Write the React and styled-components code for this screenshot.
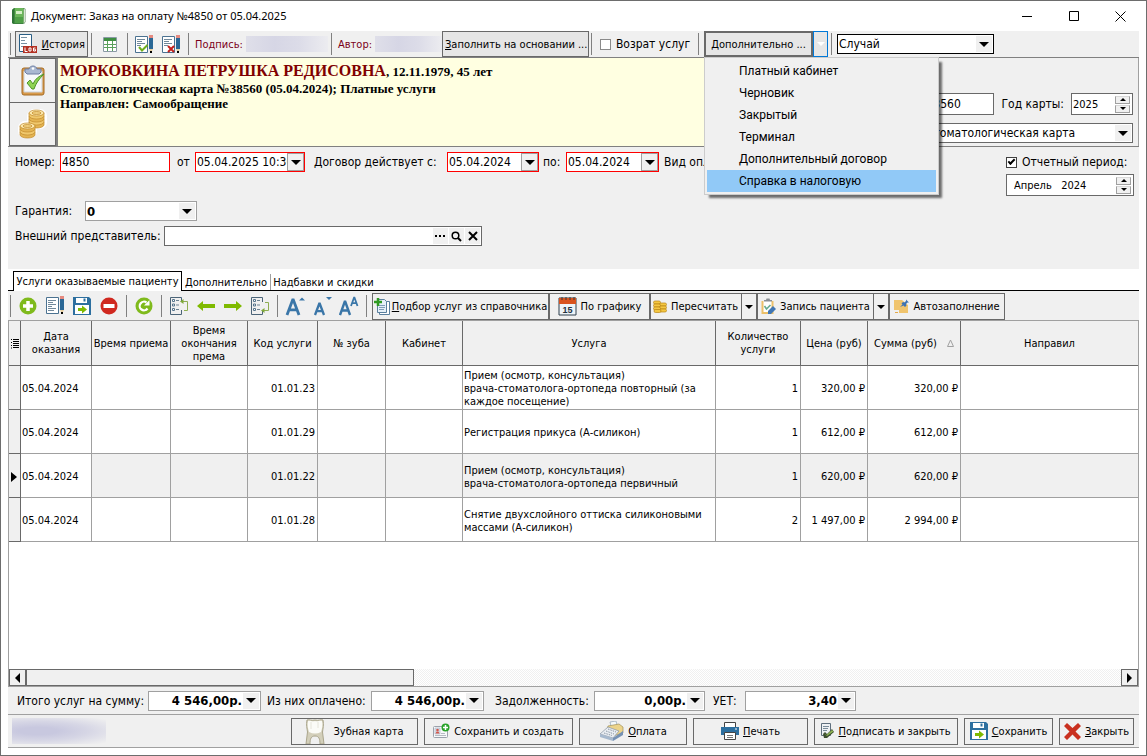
import React from "react";
import styled, { createGlobalStyle, css } from "styled-components";

const UI = '"DejaVu Sans Condensed", "Noto Sans", sans-serif';
const SYS = 'Roboto, "Noto Sans", sans-serif';
const SERIF = '"Liberation Serif", "Times New Roman", serif';
const FACE = "#f0f0f0";
const DARK = "#696969";
const MID = "#a0a0a0";

const Global = createGlobalStyle`
  *, *::before, *::after { box-sizing: border-box; }
  body { margin: 0; background: #fff; }
  button, input, select { font: inherit; color: inherit; margin: 0; border-radius: 0; }
  button { padding: 0; cursor: default; }
  svg { display: block; flex: none; }
`;

const Window = styled.div`
  display: flex;
  flex-direction: column;
  min-height: 100vh;
  padding: 0 7px 7px;
  border: 1px solid #6d6d6d;
  background: #fff;
  color: #000;
  font: 11px/13px ${UI};
  white-space: nowrap;
`;

const TitleBar = styled.header`
  display: flex;
  align-items: center;
  height: 30px;
  gap: 4px;
  padding-left: 2px;
`;
const Title = styled.h1`
  flex: 1;
  margin: 0;
  font: 400 11px/16px "Noto Sans", "Open Sans", sans-serif;
`;
const WindowButtons = styled.div`
  display: flex;
  margin-right: -5px;
`;
const WindowButton = styled.button`
  display: grid;
  place-items: center;
  width: 47px;
  height: 30px;
  border: 0;
  background: none;
`;

const Toolbar = styled.div`
  display: flex;
  align-items: center;
  height: ${(p) => p.$height}px;
  padding-left: 2px;
  background: ${FACE};
`;
const Sep = styled.span`
  flex: 0 0 1px;
  height: 22px;
  background: #808080;
`;
const Group = styled.div`
  display: flex;
  align-items: center;
  justify-content: ${(p) => (p.$start ? "flex-start" : "center")};
  flex: 0 0 ${(p) => p.$width}px;
  padding: ${(p) => (p.$start ? "0 0 0 6px" : "0")};
`;
const IconButton = styled.button`
  display: grid;
  place-items: center;
  width: 27px;
  height: 26px;
  border: 0;
  background: none;
`;
const PushButton = styled.button`
  display: flex;
  align-items: center;
  align-self: flex-end;
  justify-content: ${(p) => (p.$center ? "center" : "flex-start")};
  gap: ${(p) => p.$gap || 4}px;
  flex: none;
  width: ${(p) => p.$width}px;
  height: ${(p) => p.$height || 27}px;
  padding: 0 2px;
  border: ${(p) => (p.$heavy ? 2 : 1)}px solid ${DARK};
  background: ${(p) => (p.$raised ? "#e6e6e6" : FACE)};
`;
const SplitArrow = styled.button`
  display: grid;
  place-items: center;
  align-self: flex-end;
  flex: 0 0 15px;
  height: ${(p) => p.$height || 27}px;
  border: 1px solid ${(p) => (p.$active ? "#0078d7" : DARK)};
  border-left-width: ${(p) => (p.$active ? 1 : 0)}px;
  background: ${(p) => (p.$active ? "#e6e6e6" : FACE)};
  color: ${(p) => (p.$active ? "#fff" : "#000")};
`;
const Maroon = styled.span`
  flex: 0 0 ${(p) => p.$width}px;
  color: #7b0018;
`;
const Redacted = styled.span`
  flex: 0 0 ${(p) => p.$width}px;
  height: ${(p) => p.$height || 16}px;
  background: linear-gradient(90deg, #dfdfe9, #d6d6e5 35%, #dcdce8 65%, #ececf0);
`;
const RedactedSoft = styled.span`
  width: 94px;
  height: 26px;
  background: radial-gradient(ellipse at 28% 50%, #c8c8df 20%, #d6d6e5 52%, ${FACE} 96%);
`;

const MenuAnchor = styled.div`
  position: relative;
  display: flex;
`;
const Menu = styled.ul`
  position: absolute;
  z-index: 5;
  top: 26px;
  left: 0;
  width: 235px;
  margin: 0;
  padding: 2px;
  list-style: none;
  border: 1px solid #ccc;
  background: ${FACE};
  box-shadow: 4px 4px 2px -1px rgba(0, 0, 0, 0.55);
`;
const MenuItem = styled.button`
  display: block;
  width: 100%;
  height: 22px;
  padding: 0 0 0 32px;
  border: 0;
  text-align: left;
  font: 12px/22px ${SYS};
  background: ${(p) => (p.$active ? "#91c9f7" : "transparent")};
`;

const CheckLabel = styled.label`
  display: flex;
  align-items: center;
  gap: 5px;
  font-size: 12px;
`;
const CheckBox = styled.input`
  appearance: none;
  display: grid;
  place-items: center;
  flex: none;
  width: 11px;
  height: 11px;
  border: 1px solid #8a8a8a;
  background: #fff;
  &:checked { border-color: #404040; }
  &:checked::before {
    content: "";
    width: 7px;
    height: 4px;
    margin-bottom: 2px;
    border: solid #000;
    border-width: 0 0 2px 2px;
    transform: rotate(-45deg);
  }
`;

const Combo = styled.div`
  display: grid;
  align-items: center;
  flex: none;
  width: ${(p) => p.$width}px;
  height: 20px;
  border: 1px solid ${(p) => p.$tone || DARK};
  background: #fff;
  font-size: 12px;
  & > * { grid-area: 1 / 1; }
`;
const Select = styled.select`
  appearance: none;
  width: 100%;
  height: 18px;
  padding: 0 18px 0 1px;
  border: 0;
  outline: 0;
  background: none;
  text-align: ${(p) => (p.$right ? "right" : "left")};
  text-align-last: ${(p) => (p.$right ? "right" : "left")};
  font-weight: ${(p) => (p.$bold ? 700 : 400)};
  font-size: ${(p) => (p.$bold ? 13 : 12)}px;
`;
const ComboArrow = styled.span`
  display: grid;
  place-items: center;
  justify-self: end;
  width: 16px;
  height: 16px;
  margin-right: 1px;
  background: ${FACE};
  pointer-events: none;
`;

const Field = styled.div`
  display: flex;
  align-items: center;
  flex: none;
  width: ${(p) => p.$width}px;
  height: ${(p) => p.$height || 20}px;
  border: 1px solid ${(p) => (p.$required ? "#f00" : DARK)};
  background: #fff;
`;
const TextInput = styled.input`
  flex: 1;
  min-width: 0;
  height: 100%;
  padding: 0 0 0 ${(p) => p.$inset || 1}px;
  border: 0;
  outline: 0;
  background: none;
  font-size: ${(p) => (p.$small ? 11 : 12)}px;
`;
const DropButton = styled.button`
  display: grid;
  place-items: center;
  flex: 0 0 17px;
  height: 18px;
  border: 1px solid ${MID};
  background: ${FACE};
`;
const FlatButton = styled.button`
  display: grid;
  place-items: center;
  width: 15px;
  height: 16px;
  margin-right: 1px;
  border: 0;
  background: ${FACE};
`;
const Spinner = styled.div`
  display: flex;
  flex-direction: column;
  gap: 1px;
  margin-right: 2px;
`;
const SpinButton = styled.button`
  display: grid;
  place-items: center;
  width: 15px;
  height: 8px;
  border: 1px solid ${MID};
  border-top-color: #d8d8d8;
  background: ${FACE};
`;

const Patient = styled.section`
  display: flex;
  height: 90px;
  border: solid #808080;
  border-width: 1px 0;
  background: ${FACE};
`;
const SideButtons = styled.div`
  display: flex;
  flex-direction: column;
  flex: 0 0 50px;
  padding-left: 1px;
  border-right: 2px solid #808080;
`;
const SideButton = styled.button`
  display: grid;
  place-items: center;
  flex: 1;
  border: 1px solid ${DARK};
  background: ${FACE};
  & + & { border-top: 0; }
`;
const PatientText = styled.div`
  flex: 1;
  min-width: 0;
  padding: 3px 2px;
  background: #ffffe1;
  font: 700 13px/15px ${SERIF};
`;
const Line = styled.p`
  margin: 0;
  line-height: ${(p) => p.$lh || 15}px;
`;
const PatientName = styled.span`
  color: #800000;
  font-size: 16px;
`;
const CardPanel = styled.div`
  display: flex;
  flex-direction: column;
  align-items: flex-end;
  justify-content: flex-end;
  gap: 8px;
  flex: 0 0 435px;
  padding: 0 5px 3px 0;
  border-right: 1px solid ${MID};
`;
const CardRow = styled.div`
  display: flex;
  align-items: center;
  gap: 7px;
`;

const Form = styled.section`
  display: flex;
  justify-content: space-between;
  height: 122px;
  padding: 5px 5px 0 7px;
  background: ${FACE};
`;
const FormColumn = styled.div`
  display: flex;
  flex-direction: column;
  align-items: flex-start;
  gap: ${(p) => (p.$tight ? 2 : 5)}px;
`;
const FormRow = styled.div`
  display: flex;
  align-items: center;
  height: 20px;
  &:first-child { margin-bottom: ${(p) => (p.$spaced ? 24 : 0)}px; }
`;
const Label = styled.label`
  flex: 0 0 ${(p) => (p.$width ? `${p.$width}px` : "auto")};
  padding-left: ${(p) => p.$inset || 0}px;
  font-size: 12px;
  line-height: 16px;
`;

const TabStrip = styled.nav`
  display: flex;
  align-items: flex-end;
  height: 22px;
  background: linear-gradient(#000, #000) bottom / 100% 1px no-repeat #fff;
`;
const Tab = styled.button`
  height: ${(p) => (p.$active ? 20 : 16)}px;
  width: ${(p) => p.$width}px;
  margin-left: ${(p) => (p.$active ? 5 : 0)}px;
  margin-bottom: ${(p) => (p.$active ? 0 : 1)}px;
  border: 0 solid ${MID};
  background: #fff;
  ${(p) => p.$divided && css`border-left-width: 1px;`}
  ${(p) => p.$active && css`border: solid #000; border-width: 1px 1px 0;`}
`;

const GridArea = styled.section`
  display: flex;
  flex-direction: column;
  flex: 1;
  border: 1px solid ${MID};
  background: #fff;
`;
const Table = styled.table`
  width: 100%;
  table-layout: fixed;
  border-spacing: 0;
`;
const Th = styled.th`
  height: 45px;
  padding: 0;
  border: solid ${DARK};
  border-width: 0 1px 1px 0;
  background: ${FACE};
  font-weight: 400;
  white-space: normal;
  &:last-child { border-right: 0; }
`;
const Td = styled.td`
  height: 44px;
  padding: 2px 2px 0 1px;
  border: solid ${MID};
  border-width: 0 1px 1px 0;
  background: ${(p) => (p.$shade ? FACE : "#fff")};
  text-align: ${(p) => (p.$right ? "right" : "left")};
  white-space: pre-line;
  &:first-child { border-color: ${DARK}; }
  &:last-child { border-right: 0; }
`;
const HeadFlex = styled.span`
  display: flex;
  align-items: center;
  justify-content: space-between;
  padding: 0 6px;
`;
const Marker = styled.span`
  display: grid;
  place-items: center;
`;
const ScrollBar = styled.div`
  display: flex;
  height: 17px;
  margin-top: auto;
  background: repeating-conic-gradient(#fff 0 25%, ${FACE} 0 50%) 0 0 / 2px 2px;
`;
const ScrollButton = styled.button`
  display: grid;
  place-items: center;
  width: 17px;
  border: 1px solid ${DARK};
  background: ${FACE};
  &:last-child { margin-left: auto; }
`;
const Thumb = styled.div`
  width: 388px;
  border: 1px solid ${DARK};
  background: ${FACE};
`;

const Totals = styled.section`
  display: flex;
  align-items: center;
  height: 28px;
  padding-left: 9px;
  border-bottom: 1px solid ${MID};
  background: ${FACE};
`;
const Footer = styled.footer`
  display: flex;
  align-items: center;
  justify-content: space-between;
  height: 33px;
  padding: 0 5px 0 4px;
  border-bottom: 1px solid ${MID};
  background: ${FACE};
`;
const Actions = styled.div`
  display: flex;
  gap: 6px;
`;

/* ---------- icons ---------- */
const Down = ({ size = 10 }) => (
  <svg width={size} height={size / 2} viewBox="0 0 10 5"><path d="M0 0h10L5 5z" fill="currentColor" /></svg>
);
const Up = () => (
  <svg width="6" height="3" viewBox="0 0 6 3"><path d="M0 3h6L3 0z" /></svg>
);
const Book = () => (
  <svg width="17" height="18" viewBox="0 0 17 18">
    <path d="M2 3l2-2h10l1 1v14l-2 1H3l-1-1z" fill="#3d8240" />
    <path d="M13.500 2h2v13l-2 1.500z" fill="#d9e6d4" stroke="#7f9c7c" strokeWidth=".5" />
    <path d="M4.500 1h9v15h-9z" fill="#6cb65b" />
    <path d="M2 3l2.500-2v15H2z" fill="#2f7436" />
    <path d="M6 4h6v3H6z" fill="#d6efc8" />
    <path d="M5 10h8v6H5z" fill="#4f9f47" />
  </svg>
);
const LogIcon = () => (
  <svg width="20" height="20" viewBox="0 0 20 20">
    <path d="M1.500.5h12v17h-12z" fill="#fff" stroke="#2b5f85" />
    <path d="M3 3.500h6M3 6.500h4M3 9.500h6M3 12.500h3" stroke="#7890a2" />
    <path d="M5 12h14v7H5z" fill="#b23022" />
    <path d="M7 13.500v4h2.500M11 14h2v3h-2zM17.500 14h-2v3h2v-1.500h-1" fill="none" stroke="#fff" />
  </svg>
);
const SheetIcon = () => (
  <svg width="14" height="15" viewBox="0 0 14 15">
    <path d="M.5.5h13v14H.5z" fill="#fff" stroke="#8a9aa4" />
    <path d="M1 1h12v3H1z" fill="#3e8e41" />
    <path d="M1 7.500h12M1 10.500h12M4.500 4v10M9.500 4v10" stroke="#5aa05c" />
  </svg>
);
const Pencil = ({ x }) => (
  <g transform={`translate(${x} 0)`}>
    <path d="M0 0h4v3H0z" fill="#e58a80" />
    <path d="M0 3h4v11H0z" fill="#2a6795" />
    <path d="M0 14h4l-2 4z" fill="#e7cfa0" />
    <path d="M1 16h2v2H1z" fill="#000" />
  </g>
);
const DocPencil = ({ mark }) => (
  <svg width="19" height="19" viewBox="0 0 19 19">
    <path d="M.5 1.500h12v16H.5z" fill="#fff" stroke="#4b7291" />
    <path d="M2 4.500h8M2 6.500h5M2 8.500h8M2 10.500h4" stroke="#71889a" />
    {!mark && <path d="M2 12.500h8M2 14.500h6" stroke="#71889a" />}
    {mark === "check" && <path d="M4 12l3 3.500L12.500 10" fill="none" stroke="#6fae1d" strokeWidth="2" />}
    {mark === "cross" && <path d="M6 11l6 6M12 11l-6 6" stroke="#c3201c" strokeWidth="2" />}
    <Pencil x={14} />
  </svg>
);
const Clipboard = () => (
  <svg width="24" height="31" viewBox="0 0 24 31">
    <rect x="1" y="3" width="22" height="27" rx="2" fill="#d99b4c" stroke="#a56a22" />
    <path d="M3 6h18v21H3z" fill="#f6f8fb" stroke="#cdd3da" />
    <path d="M4 4h4c1-4 7-4 8 0h4v3l-2 2H6L4 7z" fill="#a9b8d2" stroke="#6e7fa3" />
    <circle cx="12" cy="3.500" r="1.300" fill="#fff" />
    <path d="M6 18l3-3 3 4c2-5 6-8 11-10-5 5-8 9-10 15h-2z" fill="#8fd455" stroke="#4e9427" />
  </svg>
);
const Stack = ({ x, y, n }) => (
  <g transform={`translate(${x} ${y})`} stroke="#c08a2c" strokeWidth=".7">
    {Array.from({ length: n }, (_, i) => (
      <path key={i} d={`M0 ${(n - i) * 3}v3c1 4 14 4 15 0v-3z`} fill={i % 2 ? "#f0c86c" : "#e4b452"} />
    ))}
    <ellipse cx="7.500" cy="3" rx="7.500" ry="3" fill="#fbe7ac" />
    <ellipse cx="7.500" cy="3" rx="4.500" ry="1.500" fill="#efcd7c" />
  </g>
);
const Coins = () => (
  <svg width="30" height="30" viewBox="0 0 30 30">
    <g fill="#fff"><rect x="9" y="0" width="20" height="20" rx="7" /><rect x="0" y="12" width="19" height="17" rx="7" /></g>
    <g transform="translate(-1 -1)"><Stack x={12} y={2} n={4} /></g>
    <Stack x={2} y={14} n={3} />
  </svg>
);
const SmallCoins = () => (
  <svg width="14" height="13" viewBox="0 0 14 13">
    {[0, 3, 6].map((y) => (
      <g key={y} stroke="#b98413" strokeWidth=".7" fill="#f4c742">
        <rect x=".5" y={y + 1} width="7" height="3" rx="1.500" />
        <rect x="6.500" y={y + 3} width="7" height="3" rx="1.500" />
      </g>
    ))}
    <rect x="1" y="9.500" width="7" height="3" rx="1.500" fill="#f4c742" stroke="#b98413" strokeWidth=".7" />
  </svg>
);
const Disc = ({ kind }) => (
  <svg width="18" height="18" viewBox="0 0 18 18">
    <circle cx="9" cy="9" r="8.500" fill={kind === "minus" ? "#d0281f" : "#7fba1c"} />
    {kind === "plus" && <path d="M9 4v10M4 9h10" stroke="#fff" strokeWidth="3.500" />}
    {kind === "minus" && <path d="M3.500 9h11" stroke="#fff" strokeWidth="4" />}
    {kind === "refresh" && (
      <>
        <path d="M12.500 11.500A4.300 4.300 0 1 1 11.500 5.500" fill="none" stroke="#fff" strokeWidth="2.200" />
        <path d="M9 8.500h5.500V3z" fill="#fff" />
      </>
    )}
  </svg>
);
const Floppy = () => (
  <svg width="18" height="18" viewBox="0 0 18 18">
    <path d="M0 0h16l2 2v16H0z" fill="#2d6f9f" />
    <path d="M3 1h11v5H3z" fill="#fff" /><path d="M10.500 1.500h2v3h-2z" fill="#2d6f9f" />
    <path d="M2 8h14v9H2z" fill="#fff" />
    <path d="M5 11h4V8.500l5 4-5 4V14H5z" fill="#7fba00" />
  </svg>
);
const ListMove = ({ up }) => (
  <svg width="19" height="18" viewBox="0 0 19 18">
    <path d="M11.500 5V.5H.5v17h11V13" fill="none" stroke="#4b6478" />
    <path d="M2.500 2.500h2v2h-2zM2.500 7h2v2h-2zM2.500 11.500h2v2h-2z" fill="#fff" stroke="#56748c" />
    <path d="M6 3.500h3M6 8h3M6 12.500h3" stroke="#6c8393" />
    <path d={up ? "M13 4.500h4.500v9H14" : "M14 5.500h3.500v8H13"} fill="none" stroke="#8fae52" />
    <path d={up ? "M13.500 2v5L10 4.500z" : "M13.500 11v5L10 13.500z"} fill="#7fa83a" />
  </svg>
);
const Arrow = ({ right }) => (
  <svg width="18" height="10" viewBox="0 0 18 10">
    <path d={right ? "M18 5L12 0v3H0v4h12v3z" : "M0 5L6 0v3h12v4H6v3z"} fill="#7fba00" />
  </svg>
);
const A = ({ x, w, y, h, s }) => (
  <path
    d={`M${x} ${y}L${x + w / 2} ${y - h}L${x + w} ${y}M${x + w * 0.2} ${y - h * 0.32}H${x + w * 0.8}`}
    fill="none" stroke="#3a76a8" strokeWidth={s} strokeLinejoin="bevel"
  />
);
const FontIcon = ({ kind }) => (
  <svg width="20" height="20" viewBox="0 0 20 20">
    {kind === "up" && <><A x={2} w={12} y={19} h={16} s={2.8} /><path d="M14 4.500h6l-3-3z" fill="#3a76a8" /></>}
    {kind === "down" && <><A x={3} w={9} y={19} h={12} s={2.3} /><path d="M14 1h6l-3 3z" fill="#3a76a8" /></>}
    {kind === "both" && <><A x={1} w={10} y={19} h={14} s={2.4} /><A x={12} w={6.5} y={10} h={9} s={1.8} /></>}
  </svg>
);
const AddDocs = () => (
  <svg width="16" height="17" viewBox="0 0 16 17">
    <path d="M5.500 3.500h10v13h-10z" fill="#fff" stroke="#5a7f9e" />
    <path d="M3.500 1.500h7l2 2v11h-9z" fill="#e6f0f8" stroke="#5a7f9e" />
    <path d="M5 7.500h6M5 9.500h6M5 11.500h5" stroke="#7f9db8" />
    <path d="M4 0v8M0 4h8" stroke="#2f9a23" strokeWidth="2.500" />
  </svg>
);
const Calendar = () => (
  <svg width="19" height="19" viewBox="0 0 19 19">
    <path d="M1 1h17v17H1z" fill="#eef4f8" stroke="#2e3f4d" />
    <path d="M1 1h17v6H1z" fill="#d9531e" /><path d="M4 0v3M8 0v3M12 0v3M16 0v3" stroke="#3b3b3b" />
    <text x="9.500" y="16" textAnchor="middle" fontSize="9" fontWeight="700" fontFamily="Liberation Sans, sans-serif" fill="#23323f">15</text>
  </svg>
);
const NoteBoard = () => (
  <svg width="15" height="17" viewBox="0 0 15 17">
    <path d="M1.500 3v12h10V3" fill="#fff" stroke="#ecc069" strokeWidth="2" />
    <path d="M3 3.500V2h2l.5-1.500h3L9 2h2v1.500z" fill="#8a8f94" />
    <path d="M3.500 8l2 3 4-4" fill="none" stroke="#67ab91" strokeWidth="1.600" />
    <path d="M7 13l5-5 3 3-5 5H7z" fill="#4076b4" />
  </svg>
);
const PinNote = () => (
  <svg width="15" height="15" viewBox="0 0 15 15">
    <path d="M0 1h8l6 5v8H5v-3H0z" fill="#f0c46d" /><path d="M1 13.500h3" stroke="#e1a84a" />
    <path d="M6 8l2.500-2.500L7.500 4.500 9 3l1.500.5L12 2V.500L15 3.500h-1.500L12 5l.5 1.500L11 8 9.500 6.500z" fill="#3d73b5" />
  </svg>
);
const Tooth = () => (
  <svg width="20" height="25" viewBox="0 0 20 25">
    <path d="M2 1c2-1 4 1 8 0 4 1 6-1 8 0 1 5 0 8-.5 12L19 25h-4c0-5-1-8-5-8s-5 3-5 8H1l1.500-12C2 9 1 6 2 1z" fill="#d3cfba" stroke="#aaa58c" />
    <path d="M3 2c2-1 4 1 7 0 3 1 5-1 7 0 1 4 0 8-1 11-4 2-8 2-12 0C3 10 2 6 3 2z" fill="#fbfbf7" />
    <path d="M6 3v7M13 3v6" stroke="#e5e4da" />
  </svg>
);
const CardPlus = () => (
  <svg width="17" height="17" viewBox="0 0 17 17">
    <rect x=".5" y="3.500" width="14" height="11" rx="1" fill="#f7f8fa" stroke="#9aa1ab" />
    <path d="M2 5h5v6H2z" fill="#dbe4f0" stroke="#a9b4c4" strokeWidth=".6" />
    <circle cx="4.500" cy="7" r="1.300" fill="#d1574b" /><path d="M2.500 10.500h4L5.500 8.500h-2z" fill="#d1574b" />
    <path d="M2 12.500h11M8 10.500h4" stroke="#b5bac2" />
    <circle cx="12.500" cy="4.500" r="4" fill="#29a329" /><path d="M12.500 2v5M10 4.500h5" stroke="#fff" strokeWidth="1.500" />
  </svg>
);
const Register = () => (
  <svg width="25" height="20" viewBox="0 0 25 20">
    <path d="M11 1l6-1 1.500 6-6 1z" fill="#f5fafc" stroke="#8fa4b5" strokeWidth=".7" />
    <path d="M9 5l11-2 4 3v6L14 15 7 12z" fill="#ecd48a" stroke="#a1905c" strokeWidth=".7" />
    <path d="M1 13l8-7 11 4-6 7z" fill="#e9edf2" stroke="#8995a4" strokeWidth=".7" />
    <path d="M1 13l13 4v3L1 16z" fill="#a7b9ce" /><path d="M14 17l10-7v4l-10 6z" fill="#7591b4" />
    <path d="M9 8l8 3M7 10l8 3M5 12l8 2.500" stroke="#8d98a5" strokeDasharray="1.500 1" />
  </svg>
);
const Printer = () => (
  <svg width="18" height="18" viewBox="0 0 18 18">
    <path d="M3.500.5h11v6h-11z" fill="#fff" stroke="#444" />
    <path d="M0 5h18v8H0z" fill="#2d6f9f" /><path d="M14 7h2" stroke="#fff" />
    <path d="M3.500 10.500h11v7h-11z" fill="#fff" stroke="#444" /><path d="M6 13.500h6M6 15.500h6" stroke="#777" />
  </svg>
);
const SignDoc = () => (
  <svg width="13" height="16" viewBox="0 0 13 16">
    <path d="M.5.5h9v12h-9z" fill="#eef1f4" stroke="#5f6f7d" /><path d="M2 3.500h6M2 5.500h5M2 7.500h4" stroke="#7b8c9a" />
    <path d="M2 11l2-2 2 2 5-5 2 3-7 6H3z" fill="#3c4e30" /><path d="M3 10l2.500 2L11 7l1.500 1.500L6 13z" fill="#8fb554" />
  </svg>
);
const RedCross = () => (
  <svg width="17" height="17" viewBox="0 0 17 17">
    <path d="M0 3l3-3 5.500 5L14 0l3 3-5.500 5.500L17 14l-3 3-5.500-5.500L3 17l-3-3 5.500-5.500z" fill="#c9301f" />
  </svg>
);
const DotsIcon = () => <svg width="11" height="2"><path d="M0 0h2v2H0zM4 0h2v2H4zM8 0h2v2H8z" /></svg>;
const Lens = () => (
  <svg width="11" height="11" viewBox="0 0 11 11" fill="none" stroke="#000"><circle cx="4.500" cy="4.500" r="3.300" strokeWidth="1.500" /><path d="M7 7l3 3" strokeWidth="2" /></svg>
);
const Cross = () => <svg width="10" height="10"><path d="M1 1l8 8M9 1L1 9" stroke="#000" strokeWidth="2" /></svg>;

/* ---------- composed controls ---------- */
const DateField = ({ id, width, value }) => (
  <Field $width={width} $required>
    <TextInput id={id} defaultValue={value} />
    <DropButton aria-label="Открыть календарь"><Down /></DropButton>
  </Field>
);
const ComboBox = ({ id, width, tone, value, right, bold, label }) => (
  <Combo $width={width} $tone={tone}>
    <Select id={id} aria-label={label} $right={right} $bold={bold}><option>{value}</option></Select>
    <ComboArrow><Down /></ComboArrow>
  </Combo>
);
const SpinField = ({ id, width, value, inset, label }) => (
  <Field $width={width} $height={22}>
    <TextInput id={id} aria-label={label} defaultValue={value} $inset={inset} $small />
    <Spinner>
      <SpinButton aria-label="Больше"><Up /></SpinButton>
      <SpinButton aria-label="Меньше"><Down size={6} /></SpinButton>
    </Spinner>
  </Field>
);

const menu = ["Платный кабинет", "Черновик", "Закрытый", "Терминал", "Дополнительный договор", "Справка в налоговую"];
const widths = [12, 71, 79, 77, 70, 68, 77, 253, 85, 67, 93];
const heads = ["Дата оказания", "Время приема", "Время окончания према", "Код услуги", "№ зуба", "Кабинет", "Услуга", "Количество услуги", "Цена (руб)"];
const rows = [
  ["01.01.23", "Прием (осмотр, консультация)\nврача-стоматолога-ортопеда повторный (за\nкаждое посещение)", "1", "320,00 ₽", "320,00 ₽"],
  ["01.01.29", "Регистрация прикуса (А-силикон)", "1", "612,00 ₽", "612,00 ₽"],
  ["01.01.22", "Прием (осмотр, консультация)\nврача-стоматолога-ортопеда первичный", "1", "620,00 ₽", "620,00 ₽"],
  ["01.01.28", "Снятие двухслойного оттиска силиконовыми\nмассами (А-силикон)", "2", "1 497,00 ₽", "2 994,00 ₽"],
];

export default function App() {
  return (
    <Window>
      <Global />
      <TitleBar>
        <Book />
        <Title>Документ: Заказ на оплату №4850 от 05.04.2025</Title>
        <WindowButtons>
          <WindowButton aria-label="Свернуть"><svg width="10" height="10"><path d="M0 5.500h10" stroke="#000" /></svg></WindowButton>
          <WindowButton aria-label="Развернуть"><svg width="10" height="10"><path d="M.5.5h9v9h-9z" fill="none" stroke="#000" /></svg></WindowButton>
          <WindowButton aria-label="Закрыть окно"><svg width="11" height="11"><path d="M.5.5l10 10M10.500.5l-10 10" stroke="#000" /></svg></WindowButton>
        </WindowButtons>
      </TitleBar>

      <Toolbar $height={26}>
        <Sep />
        <Group $width={80}>
          <PushButton $width={73} $height={26} $raised><LogIcon /><span><u>И</u>стория</span></PushButton>
        </Group>
        <Sep />
        <Group $width={35}><IconButton aria-label="Таблица"><SheetIcon /></IconButton></Group>
        <Sep />
        <Group $width={60}>
          <IconButton aria-label="Подписать"><DocPencil mark="check" /></IconButton>
          <IconButton aria-label="Снять подпись"><DocPencil mark="cross" /></IconButton>
        </Group>
        <Sep />
        <Group $width={142} $start><Maroon $width={51}>Подпись:</Maroon><Redacted $width={82} /></Group>
        <Sep />
        <Group $width={110} $start><Maroon $width={37}>Автор:</Maroon><Redacted $width={67} /></Group>
        <PushButton $width={147} $height={26} $raised><span><u>З</u>аполнить на основании ...</span></PushButton>
        <Group $width={2} />
        <Sep />
        <Group $width={106}>
          <CheckLabel><CheckBox type="checkbox" />Возрат услуг</CheckLabel>
        </Group>
        <Sep />
        <Group $width={5} />
        <MenuAnchor>
          <PushButton $width={109} $height={26} $raised $heavy $center><span><u>Д</u>ополнительно ...</span></PushButton>
          <SplitArrow $active $height={26} aria-label="Открыть меню"><Down size={8} /></SplitArrow>
          <Menu>
            {menu.map((m, i) => (
              <li key={m}><MenuItem $active={i === menu.length - 1}>{m}</MenuItem></li>
            ))}
          </Menu>
        </MenuAnchor>
        <Group $width={3} />
        <Sep />
        <Group $width={5} />
        <ComboBox width={157} tone="#000" value="Случай" label="Вид случая" />
      </Toolbar>

      <Patient>
        <SideButtons>
          <SideButton aria-label="Проверка"><Clipboard /></SideButton>
          <SideButton aria-label="Деньги"><Coins /></SideButton>
        </SideButtons>
        <PatientText>
          <Line $lh={19}><PatientName>МОРКОВКИНА ПЕТРУШКА РЕДИСОВНА</PatientName>, 12.11.1979, 45 лет</Line>
          <Line>Стоматологическая карта №38560 (05.04.2024); Платные услуги</Line>
          <Line>Направлен: Самообращение</Line>
        </PatientText>
        <CardPanel>
          <CardRow>
            <Field $width={70} $height={22}><TextInput aria-label="Номер карты" defaultValue="38560" /></Field>
            <Label htmlFor="year" $width={62}>Год карты:</Label>
            <SpinField id="year" width={62} value="2025" />
          </CardRow>
          <ComboBox width={209} value="Стоматологическая карта" label="Тип карты" />
        </CardPanel>
      </Patient>

      <Form>
        <FormColumn>
          <FormRow $spaced>
            <Label htmlFor="num" $width={45}>Номер:</Label>
            <Field $width={110} $required><TextInput id="num" defaultValue="4850" /></Field>
            <Label htmlFor="from" $width={25} $inset={7}>от</Label>
            <DateField id="from" width={110} value="05.04.2025 10:30" />
            <Label htmlFor="since" $width={142} $inset={9}>Договор действует с:</Label>
            <DateField id="since" width={92} value="05.04.2024" />
            <Label htmlFor="till" $width={27} $inset={4}>по:</Label>
            <DateField id="till" width={93} value="05.04.2024" />
            <Label as="span" $width={76} $inset={5}>Вид оплаты:</Label>
          </FormRow>
          <FormRow>
            <Label htmlFor="warranty" $width={70}>Гарантия:</Label>
            <ComboBox id="warranty" width={112} tone={MID} value="0" bold />
          </FormRow>
          <FormRow>
            <Label htmlFor="agent" $width={149}>Внешний представитель:</Label>
            <Field $width={318}>
              <TextInput id="agent" defaultValue="" />
              <FlatButton aria-label="Выбрать"><DotsIcon /></FlatButton>
              <FlatButton aria-label="Найти"><Lens /></FlatButton>
              <FlatButton aria-label="Очистить"><Cross /></FlatButton>
            </Field>
          </FormRow>
        </FormColumn>
        <FormColumn $tight>
          <FormRow><CheckLabel><CheckBox type="checkbox" defaultChecked />Отчетный период:</CheckLabel></FormRow>
          <SpinField width={128} value="Апрель   2024" inset={7} label="Месяц отчетного периода" />
        </FormColumn>
      </Form>

      <TabStrip>
        <Tab $active $width={169}>Услуги оказываемые пациенту</Tab>
        <Tab $width={88}>Дополнительно</Tab>
        <Tab $width={106} $divided>Надбавки и скидки</Tab>
      </TabStrip>

      <Toolbar $height={29}>
        <Sep />
        <Group $width={115}>
          <IconButton aria-label="Добавить"><Disc kind="plus" /></IconButton>
          <IconButton aria-label="Изменить"><DocPencil /></IconButton>
          <IconButton aria-label="Сохранить строку"><Floppy /></IconButton>
          <IconButton aria-label="Удалить"><Disc kind="minus" /></IconButton>
        </Group>
        <Sep />
        <Group $width={34}><IconButton aria-label="Обновить"><Disc kind="refresh" /></IconButton></Group>
        <Sep />
        <Group $width={115}>
          <IconButton aria-label="В начало"><ListMove up /></IconButton>
          <IconButton aria-label="Назад"><Arrow /></IconButton>
          <IconButton aria-label="Вперед"><Arrow right /></IconButton>
          <IconButton aria-label="В конец"><ListMove /></IconButton>
        </Group>
        <Sep />
        <Group $width={88}>
          <IconButton aria-label="Крупнее"><FontIcon kind="up" /></IconButton>
          <IconButton aria-label="Мельче"><FontIcon kind="down" /></IconButton>
          <IconButton aria-label="Размер шрифта"><FontIcon kind="both" /></IconButton>
        </Group>
        <Sep />
        <Group $width={5} />
        <PushButton $width={177} $gap={2} $center><AddDocs /><span><u>П</u>одбор услуг из справочника</span></PushButton>
        <PushButton $width={101} $center><Calendar />По графику</PushButton>
        <PushButton $width={92}><SmallCoins />Пересчитать</PushButton>
        <SplitArrow aria-label="Варианты пересчета"><Down size={8} /></SplitArrow>
        <PushButton $width={117} $center><NoteBoard />Запись пациента</PushButton>
        <SplitArrow aria-label="Варианты записи"><Down size={8} /></SplitArrow>
        <PushButton $width={116} $center><PinNote />Автозаполнение</PushButton>
      </Toolbar>

      <GridArea>
        <Table>
          <colgroup>
            {widths.map((w, i) => <col key={i} width={w} />)}
            <col />
          </colgroup>
          <thead>
            <tr>
              <Th aria-label="Столбцы"><Marker><svg width="8" height="11"><path d="M0 1.500h1M0 4.500h1M0 7.500h1M0 10h1M2 1.500h6M2 3.500h6M2 5.500h6M2 7.500h6M2 9.500h6" stroke="#000" /></svg></Marker></Th>
              {heads.map((h) => <Th key={h}>{h}</Th>)}
              <Th><HeadFlex>Сумма (руб)<svg width="7" height="8"><path d="M.5 7.500h6l-3-6.500z" fill="none" stroke="#a0a0a0" /></svg></HeadFlex></Th>
              <Th>Направил</Th>
            </tr>
          </thead>
          <tbody>
            {rows.map(([code, name, qty, price, sum], i) => {
              const s = i === 2;
              return (
                <tr key={code}>
                  <Td $shade>{s && <Marker><svg width="6" height="10"><path d="M0 0l6 5-6 5z" /></svg></Marker>}</Td>
                  <Td>05.04.2024</Td>
                  <Td $shade={s} /><Td $shade={s} />
                  <Td $shade={s} $right>{code}</Td>
                  <Td $shade={s} /><Td $shade={s} />
                  <Td $shade={s}>{name}</Td>
                  <Td $shade={s} $right>{qty}</Td>
                  <Td $shade={s} $right>{price}</Td>
                  <Td $shade={s} $right>{sum}</Td>
                  <Td $shade={s} />
                </tr>
              );
            })}
          </tbody>
        </Table>
        <ScrollBar>
          <ScrollButton aria-label="Прокрутить влево"><svg width="5" height="10"><path d="M5 0L0 5l5 5z" /></svg></ScrollButton>
          <Thumb />
          <ScrollButton aria-label="Прокрутить вправо"><svg width="5" height="10"><path d="M0 0l5 5-5 5z" /></svg></ScrollButton>
        </ScrollBar>
      </GridArea>

      <Totals>
        <Label htmlFor="total" $width={131}>Итого услуг на сумму:</Label>
        <ComboBox id="total" width={113} tone={MID} value="4 546,00р." right bold />
        <Label htmlFor="paid" $width={110} $inset={6}>Из них оплачено:</Label>
        <ComboBox id="paid" width={113} tone={MID} value="4 546,00р." right bold />
        <Label htmlFor="debt" $width={110} $inset={11}>Задолженность:</Label>
        <ComboBox id="debt" width={111} tone={MID} value="0,00р." right bold />
        <Label htmlFor="uet" $width={40} $inset={8}>УЕТ:</Label>
        <ComboBox id="uet" width={111} tone={MID} value="3,40" right bold />
      </Totals>

      <Footer>
        <RedactedSoft />
        <Actions>
          <PushButton $width={127} $gap={8} $center><Tooth />Зубная карта</PushButton>
          <PushButton $width={149} $center><CardPlus />Сохранить и создать</PushButton>
          <PushButton $width={108} $center><Register /><span><u>О</u>плата</span></PushButton>
          <PushButton $width={115} $center><Printer /><span><u>П</u>ечать</span></PushButton>
          <PushButton $width={144} $center><SignDoc /><span><u>П</u>одписать и закрыть</span></PushButton>
          <PushButton $width={89} $center><Floppy /><span><u>С</u>охранить</span></PushButton>
          <PushButton $width={75} $center><RedCross /><span><u>З</u>акрыть</span></PushButton>
        </Actions>
      </Footer>
    </Window>
  );
}
